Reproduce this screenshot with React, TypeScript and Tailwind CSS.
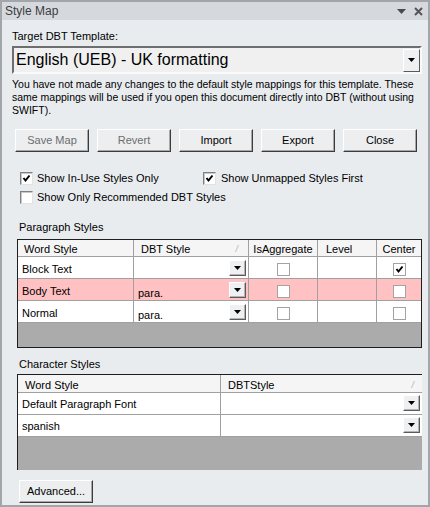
import React from 'react';

const Arrow = () => (
  <svg width="7" height="4" viewBox="0 0 7 4">
    <path d="M0 0h7L3.5 4z" fill="#000" />
  </svg>
);

const Tick = () => (
  <svg width="9" height="9" viewBox="0 0 9 9">
    <path d="M1.5 4 L3.5 6.5 L7.5 1.5" stroke="#000" strokeWidth="2" fill="none" />
  </svg>
);

function Box({ checked, flat }: { checked?: boolean; flat?: boolean }) {
  const cls = flat
    ? 'w-[13px] h-[13px] bg-white border border-[#a3a3a3] flex items-center justify-center'
    : 'w-[13px] h-[13px] bg-white border border-t-[#808080] border-l-[#808080] border-b-[#e2e2e2] border-r-[#e2e2e2] shadow-[inset_1px_1px_0_#c8c8c8] flex items-center justify-center';
  return <div className={cls}>{checked && <Tick />}</div>;
}

function DropBtn() {
  return (
    <div className="w-[17px] h-[16px] bg-[#eef0f2] border border-t-white border-l-white border-b-[#5a5a5a] border-r-[#5a5a5a] shadow-[inset_-1px_-1px_0_#b4b4b4] flex items-center justify-center">
      <Arrow />
    </div>
  );
}

function Button({ label, disabled, w = 'w-[74px]' }: { label: string; disabled?: boolean; w?: string }) {
  return (
    <div
      className={`${w} h-[23px] bg-[#eceef0] border border-t-white border-l-white border-b-[#3c3c3c] border-r-[#3c3c3c] shadow-[inset_-1px_-1px_0_#a8a8a8] flex items-center justify-center leading-[13px] ${disabled ? 'text-[#6d6d6d]' : 'text-black'}`}
    >
      {label}
    </div>
  );
}

const paraRows = [
  { word: 'Block Text', dbt: '', center: true, bg: 'bg-white' },
  { word: 'Body Text', dbt: 'para.', center: false, bg: 'bg-[#ffc1c1]' },
  { word: 'Normal', dbt: 'para.', center: false, bg: 'bg-white' },
];

const charRows = ['Default Paragraph Font', 'spanish'];

export default function App() {
  return (
    <div className="w-[430px] h-[507px] bg-[#e9ecef] border-2 border-[#a2a6aa] flex flex-col text-[11px] text-black font-['Liberation_Sans',Arial,sans-serif]">
      <div className="h-[18px] bg-[#d5d9de] flex items-center justify-between pl-[3px] pr-[5px]">
        <span className="text-[12px] leading-[18px] text-[#3c3c3c]">Style Map</span>
        <div className="flex items-center gap-[8px]">
          <svg width="9" height="5" viewBox="0 0 9 5">
            <path d="M0 0h9L4.5 5z" fill="#4a4a4a" />
          </svg>
          <svg width="9" height="9" viewBox="0 0 9 9">
            <path d="M1 1L8 8M8 1L1 8" stroke="#555" strokeWidth="2" />
          </svg>
        </div>
      </div>

      <div className="flex-1 flex flex-col pl-[10px] pt-[10px]">
        <div className="leading-[13px]">Target DBT Template:</div>

        <div className="mt-[3px] w-[410px] h-[28px] bg-[#f0f0f0] border-2 border-t-[#6e6e6e] border-l-[#6e6e6e] border-b-[#fafafa] border-r-[#fafafa] flex items-center justify-between pl-[2px] pr-[0px]">
          <span className="text-[16px] leading-[18px]">English (UEB) - UK formatting</span>
          <div className="w-[17px] h-[23px] bg-[#eef0f2] border border-t-white border-l-white border-b-[#5a5a5a] border-r-[#5a5a5a] flex items-center justify-center">
            <Arrow />
          </div>
        </div>

        <p className="mt-[4px] w-[412px] text-[10.5px] leading-[13px]">
          You have not made any changes to the default style mappings for this template. These same mappings will be
          used if you open this document directly into DBT (without using SWIFT).
        </p>

        <div className="mt-[12px] ml-[3px] flex gap-[8px]">
          <Button label="Save Map" disabled />
          <Button label="Revert" disabled />
          <Button label="Import" />
          <Button label="Export" />
          <Button label="Close" />
        </div>

        <div className="mt-[17px] ml-[8px] h-[19px] flex items-center">
          <Box checked />
          <span className="ml-[4px] w-[166px] leading-[13px]">Show In-Use Styles Only</span>
          <Box checked />
          <span className="ml-[5px] leading-[13px]">Show Unmapped Styles First</span>
        </div>
        <div className="ml-[8px] h-[19px] flex items-center">
          <Box />
          <span className="ml-[4px] leading-[13px]">Show Only Recommended DBT Styles</span>
        </div>

        <div className="mt-[14px] ml-[7px] leading-[13px]">Paragraph Styles</div>

        <div className="mt-[5px] ml-[5px] w-[405px] border border-[#1e1e1e] flex flex-col">
          <div className="h-[17px] bg-[#f5f5f5] border-b border-[#a0a0a0] flex leading-[13px]">
            <div className="w-[116px] border-r border-[#a0a0a0] pl-[6px] pt-[3px]">Word Style</div>
            <div className="w-[115px] border-r border-[#a0a0a0] pl-[7px] pt-[3px] flex justify-between pr-[10px]">
              <span>DBT Style</span>
              <span className="text-[9px] text-[#b0b0b0] italic">/</span>
            </div>
            <div className="w-[69px] border-r border-[#a0a0a0] pt-[3px] text-center">IsAggregate</div>
            <div className="w-[59px] border-r border-[#a0a0a0] pl-[8px] pt-[3px]">Level</div>
            <div className="w-[44px] pt-[3px] text-center">Center</div>
          </div>
          {paraRows.map((r) => (
            <div key={r.word} className={`h-[22px] border-b border-[#a0a0a0] flex leading-[13px] ${r.bg}`}>
              <div className="w-[116px] border-r border-[#a0a0a0] pl-[4px] pt-[6px]">{r.word}</div>
              <div className="w-[115px] border-r border-[#a0a0a0] pl-[4px] pr-[2px] flex justify-between">
                <span className="pt-[8px]">{r.dbt}</span>
                <div className="pt-[3px]">
                  <DropBtn />
                </div>
              </div>
              <div className="w-[69px] border-r border-[#a0a0a0] flex justify-center pt-[6px]">
                <Box flat />
              </div>
              <div className="w-[59px] border-r border-[#a0a0a0]" />
              <div className="w-[44px] flex justify-center pt-[6px]">
                <Box flat checked={r.center} />
              </div>
            </div>
          ))}
          <div className="h-[24px] bg-[#ababab]" />
        </div>

        <div className="mt-[10px] ml-[7px] leading-[13px]">Character Styles</div>

        <div className="mt-[3px] ml-[5px] w-[405px] border-l border-t border-[#1e1e1e] flex flex-col">
          <div className="h-[18px] bg-[#f5f5f5] border-b border-[#a0a0a0] flex leading-[13px]">
            <div className="w-[203px] border-r border-[#a0a0a0] pl-[7px] pt-[4px]">Word Style</div>
            <div className="w-[201px] pl-[7px] pr-[8px] pt-[4px] flex justify-between">
              <span>DBTStyle</span>
              <span className="text-[9px] text-[#b0b0b0] italic">/</span>
            </div>
          </div>
          {charRows.map((w) => (
            <div key={w} className="h-[22px] bg-white border-b border-[#a0a0a0] flex leading-[13px]">
              <div className="w-[203px] border-r border-[#a0a0a0] pl-[4px] pt-[5px]">{w}</div>
              <div className="w-[201px] flex justify-end pr-[2px] pt-[2px]">
                <DropBtn />
              </div>
            </div>
          ))}
          <div className="h-[33px] bg-[#ababab]" />
        </div>

        <div className="mt-[10px] ml-[7px]">
          <Button label="Advanced..." w="w-[74px]" />
        </div>
      </div>
    </div>
  );
}
